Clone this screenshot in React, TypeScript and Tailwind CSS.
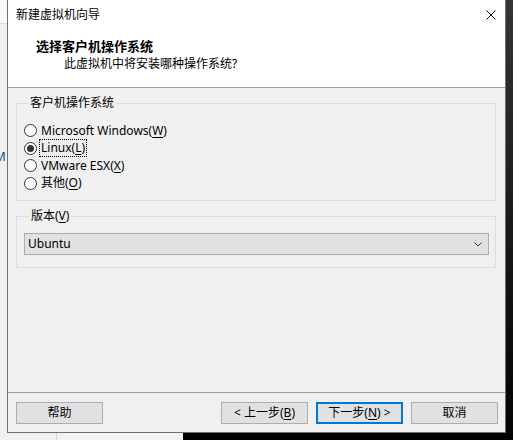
export default function App() {
  return (
    <div className="w-[513px] h-[440px] flex flex-col overflow-hidden text-black text-[12px] leading-[16px] font-['Noto_Sans','Noto_Sans_CJK_SC',sans-serif]">
      <div className="flex h-[433px]">
        {/* background window bits on the left */}
        <div className="w-[7px] flex flex-col bg-[#f0f0f0] overflow-hidden">
          <div className="h-[24px] shrink-0 bg-[#f9f9f9] border-b border-[#d9d9d9]" />
          <div className="mt-[124px] -ml-[6px] text-[13px] text-[#1c4f9a]">M</div>
        </div>

        {/* dialog */}
        <div className="w-[499px] flex flex-col border-x border-b border-[#6f6f6f] bg-[#f0f0f0]">
          <div className="h-[88px] shrink-0 bg-white border-b border-[#a0a0a0] flex flex-col">
            <div className="h-[30px] flex items-center justify-between pl-[8px] pr-[9px]">
              <span>新建虚拟机向导</span>
              <svg width="10" height="10" viewBox="0 0 10 10" className="text-black">
                <path d="M0.5 0.5 L9.5 9.5 M9.5 0.5 L0.5 9.5" stroke="currentColor" strokeWidth="1" />
              </svg>
            </div>
            <div className="pl-[28px] mt-[8px] font-bold text-[13px]">选择客户机操作系统</div>
            <div className="pl-[56px] mt-[2px]">此虚拟机中将安装哪种操作系统?</div>
          </div>

          <div className="flex-1 pt-[7px] pl-[8px] pr-[9px] flex flex-col gap-[7px]">
            <fieldset className="border border-[#dcdcdc] pl-[7px] pt-[11px] pb-[8px]">
              <legend className="ml-[4px] px-[2px]">客户机操作系统</legend>
              <Radio>
                Microsoft Windows(<u className="underline-offset-2">W</u>)
              </Radio>
              <Radio checked focused>
                Linux(<u className="underline-offset-2">L</u>)
              </Radio>
              <Radio>
                VMware ESX(<u className="underline-offset-2">X</u>)
              </Radio>
              <Radio>
                其他(<u className="underline-offset-2">O</u>)
              </Radio>
            </fieldset>

            <fieldset className="border border-[#dcdcdc] pl-[7px] pr-[6px] pt-[9px] pb-[12px]">
              <legend className="ml-[5px] px-[2px]">
                版本(<u className="underline-offset-2">V</u>)
              </legend>
              <div className="h-[22px] bg-[#e1e1e1] border border-[#adadad] flex items-center justify-between pl-[3px] pr-[6px]">
                <span>Ubuntu</span>
                <svg width="8" height="5" viewBox="0 0 8 5">
                  <polyline points="0.5,0.5 4,4 7.5,0.5" fill="none" stroke="#333" strokeWidth="1" />
                </svg>
              </div>
            </fieldset>
          </div>

          <div className="shrink-0 border-t border-[#a0a0a0] pt-[9px] pb-[8px] pl-[8px] pr-[7px] flex">
            <Button>帮助</Button>
            <div className="flex-1" />
            <div className="flex gap-[8px]">
              <Button>
                &lt; 上一步(<u className="underline-offset-2">B</u>)
              </Button>
              <Button primary>
                下一步(<u className="underline-offset-2">N</u>) &gt;
              </Button>
              <Button>取消</Button>
            </div>
          </div>
        </div>

        <div className="w-[7px] bg-gradient-to-b from-[#353535] to-[#050505]" />
      </div>

      <div className="flex h-[7px]">
        <div className="w-[56px] bg-[#f0f0f0]" />
        <div className="w-[1px] bg-[#d4d4d4]" />
        <div className="w-[126px] bg-[#f3f3f3]" />
        <div className="flex-1 bg-black" />
      </div>
    </div>
  );
}

function Radio({
  children,
  checked,
  focused,
}: {
  children: React.ReactNode;
  checked?: boolean;
  focused?: boolean;
}) {
  return (
    <div className="h-[17.5px] flex items-center">
      <span className="w-[13px] h-[13px] shrink-0 rounded-full border border-[#333] bg-white flex items-center justify-center">
        {checked && <span className="w-[7px] h-[7px] rounded-full bg-[#333]" />}
      </span>
      <span
        className={
          focused
            ? "ml-[2px] px-px border border-dotted border-black"
            : "ml-[2px] px-px border border-transparent"
        }
      >
        {children}
      </span>
    </div>
  );
}

function Button({ children, primary }: { children: React.ReactNode; primary?: boolean }) {
  return (
    <div
      className={
        primary
          ? "w-[87px] h-[22px] bg-[#e1e1e1] border-2 border-[#0078d7] flex items-center justify-center"
          : "w-[87px] h-[22px] bg-[#e1e1e1] border border-[#adadad] flex items-center justify-center"
      }
    >
      <span>{children}</span>
    </div>
  );
}
